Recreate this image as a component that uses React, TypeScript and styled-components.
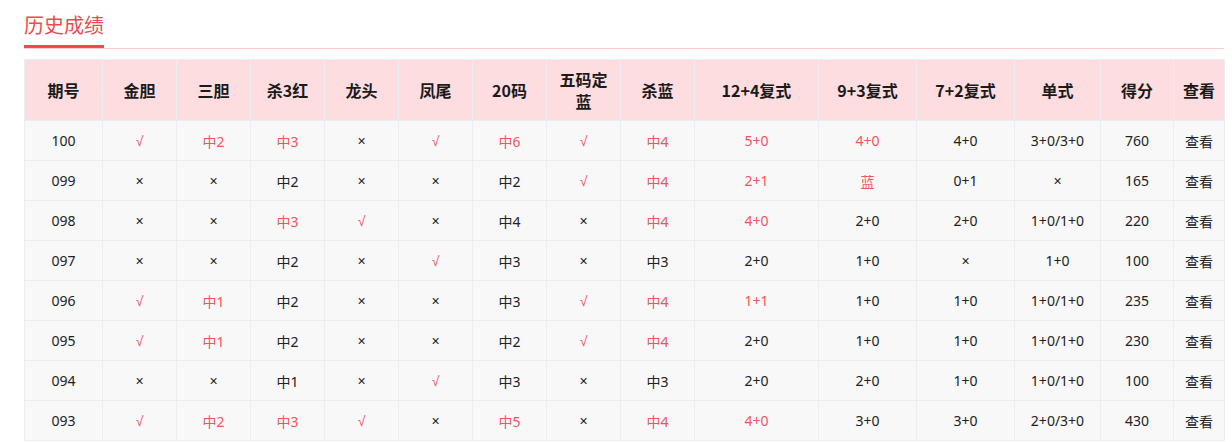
import React from 'react';
import styled, { createGlobalStyle } from 'styled-components';

const GlobalStyle = createGlobalStyle`
  html, body {
    margin: 0;
    padding: 0;
    background: #ffffff;
    font-family: "Noto Sans CJK SC", "Noto Sans", sans-serif;
    color: #222;
  }
`;

const Page = styled.div`
  padding: 0 8px 0 24px;
`;

const TitleBar = styled.div`
  display: flex;
  border-bottom: 1px solid #fcc9cc;
`;

const TitleTab = styled.div`
  font-size: 20px;
  line-height: 26px;
  color: #f2494f;
  padding: 12px 0 7px;
  border-bottom: 3px solid #f2494f;
  width: 80px;
`;

const Table = styled.table`
  margin-top: 10px;
  width: 1200px;
  table-layout: fixed;
  border-collapse: collapse;
  border: 1px solid #e9ebf2;
`;

const HeadCell = styled.th`
  height: 60px;
  padding: 0 8px;
  background: #fdddE0;
  border: 1px solid #ebedf3;
  font-size: 16px;
  line-height: 22px;
  font-weight: 700;
  color: #1a1a1a;
  text-align: center;
`;

const Cell = styled.td<{ $hot?: boolean }>`
  height: 39px;
  padding: 0 4px;
  background: #f8f8f9;
  border: 1px solid #ebedf3;
  font-family: "Noto Sans", "Noto Sans CJK SC", sans-serif;
  font-size: 14px;
  color: ${(p) => (p.$hot ? '#f4535b' : '#222')};
  text-align: center;
  white-space: nowrap;
  overflow: hidden;
`;

const Mark = styled.span`
  font-family: "Liberation Sans", "DejaVu Sans", sans-serif;
  font-size: 14px;
`;

const columns: [string, number][] = [
  ['期号', 78],
  ['金胆', 74],
  ['三胆', 74],
  ['杀3红', 74],
  ['龙头', 74],
  ['凤尾', 74],
  ['20码', 74],
  ['五码定蓝', 74],
  ['杀蓝', 74],
  ['12+4复式', 124],
  ['9+3复式', 98],
  ['7+2复式', 98],
  ['单式', 86],
  ['得分', 73],
  ['查看', 51],
];

// "!" marks a hit, shown in red
const rows: string[][] = [
  ['100', '!√', '!中2', '!中3', '×', '!√', '!中6', '!√', '!中4', '!5+0', '!4+0', '4+0', '3+0/3+0', '760'],
  ['099', '×', '×', '中2', '×', '×', '中2', '!√', '!中4', '!2+1', '!蓝', '0+1', '×', '165'],
  ['098', '×', '×', '!中3', '!√', '×', '中4', '×', '!中4', '!4+0', '2+0', '2+0', '1+0/1+0', '220'],
  ['097', '×', '×', '中2', '×', '!√', '中3', '×', '中3', '2+0', '1+0', '×', '1+0', '100'],
  ['096', '!√', '!中1', '中2', '×', '×', '中3', '!√', '!中4', '!1+1', '1+0', '1+0', '1+0/1+0', '235'],
  ['095', '!√', '!中1', '中2', '×', '×', '中2', '!√', '!中4', '2+0', '1+0', '1+0', '1+0/1+0', '230'],
  ['094', '×', '×', '中1', '×', '!√', '中3', '×', '中3', '2+0', '2+0', '1+0', '1+0/1+0', '100'],
  ['093', '!√', '!中2', '!中3', '!√', '×', '!中5', '×', '!中4', '!4+0', '3+0', '3+0', '2+0/3+0', '430'],
];

const renderValue = (v: string) =>
  v === '√' || v === '×' ? <Mark>{v}</Mark> : v;

const App: React.FC = () => (
  <Page>
    <GlobalStyle />
    <TitleBar>
      <TitleTab>历史成绩</TitleTab>
    </TitleBar>
    <Table>
      <colgroup>
        {columns.map(([name, w]) => (
          <col key={name} style={{ width: w }} />
        ))}
      </colgroup>
      <thead>
        <tr>
          {columns.map(([name]) => (
            <HeadCell key={name}>{name}</HeadCell>
          ))}
        </tr>
      </thead>
      <tbody>
        {rows.map((row) => (
          <tr key={row[0]}>
            {row.map((v, i) => {
              const hot = v.startsWith('!');
              return (
                <Cell key={i} $hot={hot}>
                  {renderValue(hot ? v.slice(1) : v)}
                </Cell>
              );
            })}
            <Cell>查看</Cell>
          </tr>
        ))}
      </tbody>
    </Table>
  </Page>
);

export default App;
